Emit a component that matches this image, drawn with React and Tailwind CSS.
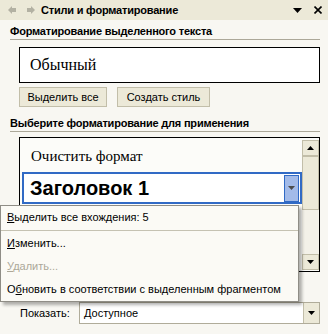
import React from 'react'

const Tri = ({ up, className = '' }) => (
  <svg width="7" height="4" viewBox="0 0 7 4" className={className}>
    <polygon points={up ? '0,4 7,4 3.5,0' : '0,0 7,0 3.5,4'} fill="currentColor" />
  </svg>
)

function SectionHeader({ children }) {
  return (
    <div className="font-bold border-b border-[#aca899] pb-[1px] leading-[14px] tracking-[-0.2px]">{children}</div>
  )
}

function XpButton({ children, className = '' }) {
  return (
    <div
      className={`h-[20px] flex items-center justify-center bg-[#ece9d8] border border-[#c2bea9] ${className}`}
    >
      {children}
    </div>
  )
}

function MenuItem({ children, disabled }) {
  return (
    <div className={`h-[23px] flex items-center pl-[6px] ${disabled ? 'text-[#aca899]' : 'text-black'}`}>
      {children}
    </div>
  )
}

export default function App() {
  return (
    <div className="w-[328px] h-[334px] bg-[#f8f7f2] relative overflow-hidden font-['Liberation_Sans',sans-serif] text-[11px] text-black">
      {/* Title bar */}
      <div className="h-[20px] bg-[#ece9d8] flex items-center pl-[8px] pr-[6px]">
        <svg width="8" height="8" viewBox="0 0 8 8" className="text-[#b3b1a3]">
          <polygon points="0,4 4,0 4,2 8,2 8,6 4,6 4,8" fill="currentColor" />
        </svg>
        <svg width="8" height="8" viewBox="0 0 8 8" className="ml-[11px] text-[#b3b1a3]">
          <polygon points="8,4 4,0 4,2 0,2 0,6 4,6 4,8" fill="currentColor" />
        </svg>
        <span className="ml-[6px] font-bold tracking-[-0.2px]">Стили и форматирование</span>
        <div className="flex-1" />
        <svg width="9" height="5" viewBox="0 0 9 5">
          <polygon points="0,0 9,0 4.5,5" fill="black" />
        </svg>
        <svg width="8" height="8" viewBox="0 0 8 8" className="ml-[12px]">
          <path d="M0.5 0.5 L7.5 7.5 M7.5 0.5 L0.5 7.5" stroke="black" strokeWidth="1.6" />
        </svg>
      </div>

      <div className="pl-[10px] pr-[8px] pt-[4px]">
        <SectionHeader>Форматирование выделенного текста</SectionHeader>

        <div className="ml-[9px] mt-[7px] h-[36px] bg-white border border-black flex items-center pl-[10px] font-['Liberation_Serif',serif] text-[16px]">
          Обычный
        </div>

        <div className="ml-[9px] mt-[4px] flex gap-[10px]">
          <XpButton className="w-[88px]">Выделить все</XpButton>
          <XpButton className="w-[93px]">Создать стиль</XpButton>
        </div>

        <div className="mt-[9px]">
          <SectionHeader>Выберите форматирование для применения</SectionHeader>
        </div>

        {/* Styles list */}
        <div className="ml-[9px] mt-[5px] h-[135px] bg-[#fcfcf9] border border-black flex">
          <div className="flex-1 pl-[2px] pt-[2px]">
            <div className="h-[32px] flex items-center pl-[9px] font-['Liberation_Serif',serif] text-[15px]">
              Очистить формат
            </div>
            <div className="h-[32px] border-2 border-[#316ac5] bg-white flex items-center pl-[6px]">
              <span className="flex-1 font-['Liberation_Sans',sans-serif] font-bold text-[20px]">Заголовок 1</span>
              <div className="w-[15px] h-[27px] mr-[1px] bg-[#a3bbe9] border border-[#316ac5] flex items-center justify-center text-[#4d4d4d]">
                <Tri />
              </div>
            </div>
          </div>
          <div className="w-[17px] pt-[2px] flex flex-col">
            <div className="h-[16px] bg-[#ece9d8] border border-[#c2bea9] flex items-center justify-center">
              <Tri up />
            </div>
            <div className="h-[54px] bg-[#ece9d8] border border-[#c2bea9]" />
            <div className="flex-1 bg-[#f3f1e8]" />
            <div className="h-[16px] mb-[1px] bg-[#ece9d8] border border-[#c2bea9] flex items-center justify-center">
              <Tri />
            </div>
          </div>
        </div>

        {/* Show */}
        <div className="mt-[30px] flex items-center">
          <span className="ml-[10px] w-[59px]">Показать:</span>
          <div className="flex-1 h-[22px] bg-white border border-[#b0ac9a] flex items-center">
            <span className="flex-1 pl-[4px]">Доступное</span>
            <div className="w-[16px] h-full bg-[#ece9d8] border-l border-[#c2bea9] flex items-center justify-center">
              <Tri />
            </div>
          </div>
        </div>
      </div>

      {/* Context menu */}
      <div className="absolute left-0 top-[205px] w-[299px] bg-[#fbfaf5] border border-[#8f8d86] shadow-[3px_3px_3px_rgba(0,0,0,0.3)]">
        <MenuItem>
          <span><u>В</u>ыделить все вхождения: 5</span>
        </MenuItem>
        <div className="h-[3px] flex items-center">
          <div className="w-full h-px bg-[#c5c2b2]" />
        </div>
        <MenuItem>
          <span><u>И</u>зменить...</span>
        </MenuItem>
        <MenuItem disabled>
          <span><u>У</u>далить...</span>
        </MenuItem>
        <MenuItem>
          <span>О<u>б</u>новить в соответствии с выделенным фрагментом</span>
        </MenuItem>
      </div>
    </div>
  )
}
